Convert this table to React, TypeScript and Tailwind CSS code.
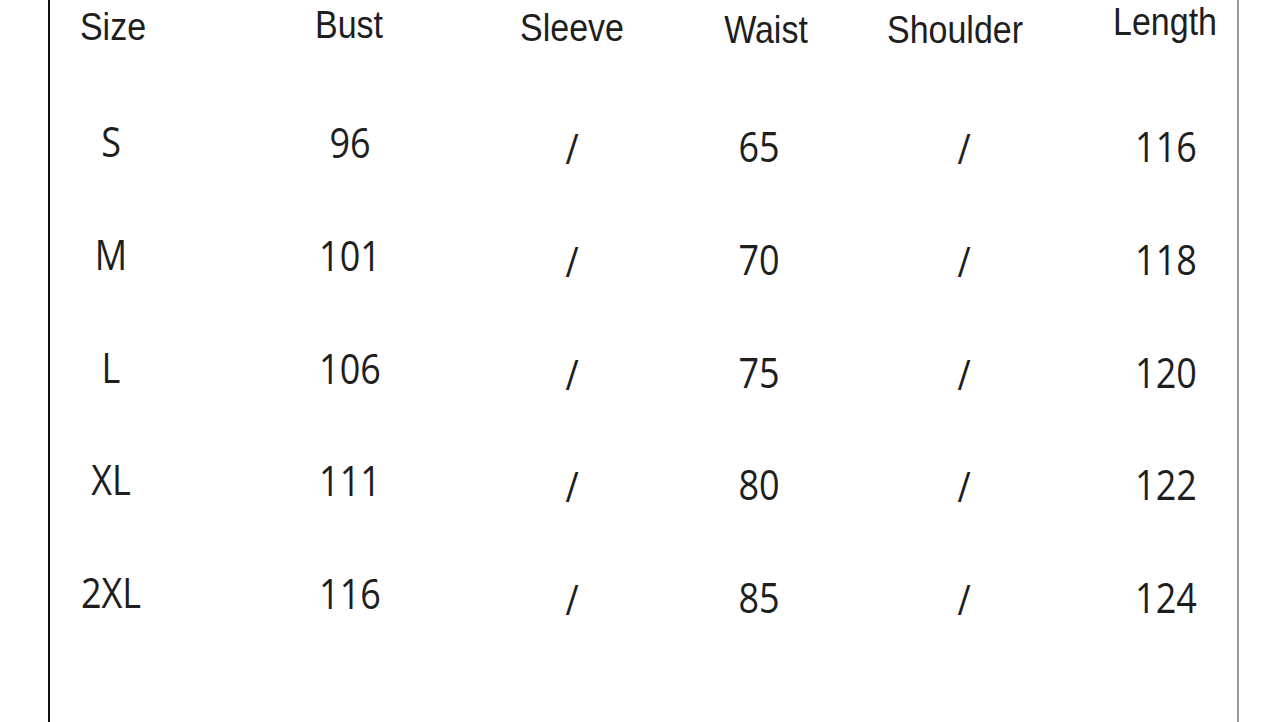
import React from 'react'

type Column = {
  label: string
  // spacing before the cell, header nudges, and data nudge
  gap: string
  head: string
  cell: string
}

const columns: Column[] = [
  { label: 'Size', gap: 'ml-[1px]', head: 'mt-[9px] ml-[4px]', cell: '-mt-[4px]' },
  { label: 'Bust', gap: 'ml-[119px]', head: 'mt-[7px] mr-[2px]', cell: '-mt-[3px]' },
  { label: 'Sleeve', gap: 'ml-[102px]', head: 'mt-[10px]', cell: 'mt-[3px]' },
  { label: 'Waist', gap: 'ml-[70px]', head: 'mt-[12px] ml-[8px]', cell: 'mt-[1px] mr-[6px]' },
  { label: 'Shoulder', gap: 'ml-[78px]', head: 'mt-[12px] mr-[10px]', cell: 'mt-[3px] ml-[8px]' },
  { label: 'Length', gap: 'ml-[86px]', head: 'mt-[4px] mr-[2px]', cell: 'mt-[1px]' },
]

const rows = [
  ['S', '96', '/', '65', '/', '116'],
  ['M', '101', '/', '70', '/', '118'],
  ['L', '106', '/', '75', '/', '120'],
  ['XL', '111', '/', '80', '/', '122'],
  ['2XL', '116', '/', '85', '/', '124'],
]

export default function App() {
  return (
    <div className="flex h-[722px] w-full overflow-hidden bg-white text-[#1e1e1e]">
      <div className="w-[48px] shrink-0" />
      <div className="w-[1191px] shrink-0 border-l-2 border-r-2 border-l-[#111] border-r-[#9a9a9a]">
        {/* header */}
        <div className="flex h-[128px] items-start">
          {columns.map((col) => (
            <div key={col.label} className={`flex w-[120px] shrink-0 justify-center ${col.gap}`}>
              <span
                className={`scale-y-115 whitespace-nowrap text-[34px] leading-none ${col.head}`}
                style={{ fontFamily: '"Liberation Sans", Arial, sans-serif' }}
              >
                {col.label}
              </span>
            </div>
          ))}
        </div>

        {/* size rows */}
        {rows.map((row) => (
          <div key={row[0]} className="flex h-[112.75px] items-start">
            {row.map((value, i) => (
              <div key={i} className={`flex w-[120px] shrink-0 justify-center ${columns[i].gap}`}>
                <span
                  className={`scale-y-115 whitespace-nowrap text-[36px] leading-none ${columns[i].cell}`}
                  style={{ fontFamily: '"Open Sans", "Noto Sans", sans-serif' }}
                >
                  {value}
                </span>
              </div>
            ))}
          </div>
        ))}
      </div>
    </div>
  )
}
